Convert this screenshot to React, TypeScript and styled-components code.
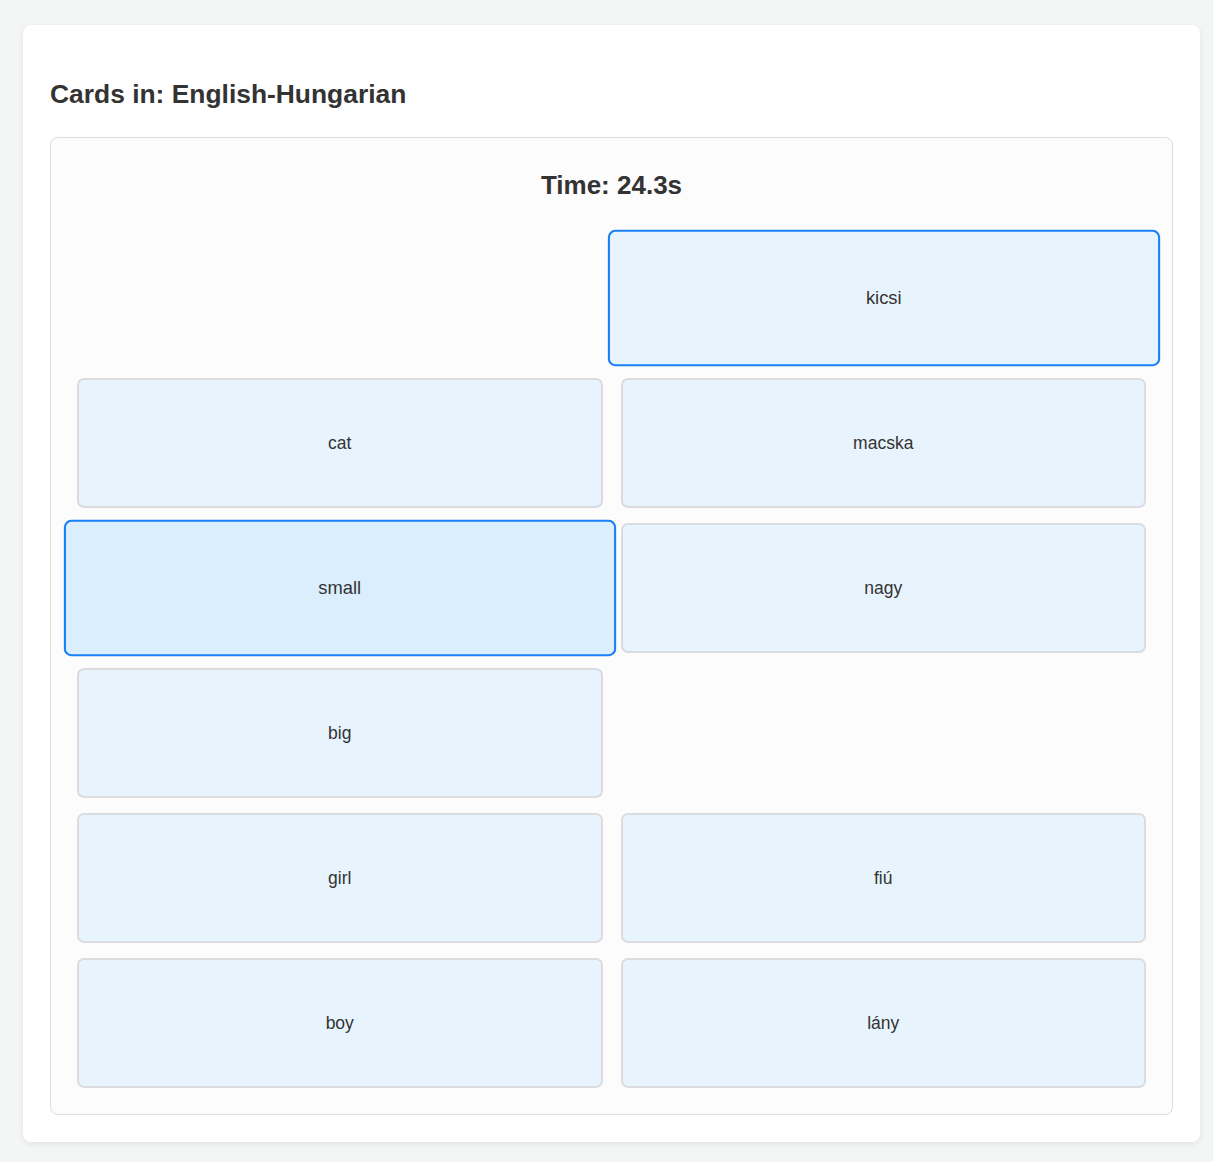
import React, {useState} from 'react';
import styled, {createGlobalStyle} from 'styled-components';

const GlobalStyle = createGlobalStyle`
  body {
    margin: 0;
    background: #f4f5f5;
    font-family: "Liberation Sans", Arial, sans-serif;
    color: #333;
  }
`;

interface Card {
  id: number;
  text: string;
  pair: number;
}

const cards: Card[] = [
  {id: 1, text: 'small', pair: 1},
  {id: 2, text: 'kicsi', pair: 1},
  {id: 3, text: 'cat', pair: 2},
  {id: 4, text: 'macska', pair: 2},
  {id: 5, text: 'small', pair: 3},
  {id: 6, text: 'nagy', pair: 4},
  {id: 7, text: 'big', pair: 4},
  {id: 8, text: 'kicsi', pair: 3},
  {id: 9, text: 'girl', pair: 5},
  {id: 10, text: 'fiú', pair: 6},
  {id: 11, text: 'boy', pair: 6},
  {id: 12, text: 'lány', pair: 5},
];

const Page = styled.div`
  padding: 25px 13px 20px 23px;
`;

const Panel = styled.div`
  background: #fff;
  border-radius: 8px;
  box-shadow: 0 2px 6px rgba(0, 0, 0, 0.08);
  padding: 27px;
`;

const Title = styled.h2`
  margin: 27px 0 27px;
  font-size: 26.4px;
  font-weight: bold;
  color: #333;
`;

const Board = styled.div`
  background: #fcfcfc;
  border: 1px solid #dddddd;
  border-radius: 8px;
  padding: 27px 26px 26px 26px;
`;

const Timer = styled.h3`
  margin: 5px 0 32px;
  text-align: center;
  font-size: 26px;
  font-weight: bold;
  color: #333;
`;

const Grid = styled.div`
  display: grid;
  grid-template-columns: 1fr 1fr;
  gap: 15px 18px;
`;

const Tile = styled.button<{$selected: boolean; $hover: boolean; $hidden: boolean}>`
  height: 130px;
  display: flex;
  align-items: center;
  justify-content: center;
  border-radius: 7px;
  border: 2px solid ${p => (p.$selected ? '#1a80f6' : '#dadcdf')};
  background: ${p => (p.$hover ? '#dbeefd' : '#e8f4fd')};
  font-family: "Liberation Sans", Arial, sans-serif;
  font-size: 17.5px;
  color: #333;
  cursor: pointer;
  visibility: ${p => (p.$hidden ? 'hidden' : 'visible')};
  transform: ${p => (p.$selected ? 'scale(1.05)' : 'none')};
  transition: transform 0.15s;
`;

export default function App() {
  const [selected, setSelected] = useState<number[]>([2, 5]);
  const matched = [1, 8];

  const toggle = (id: number) => {
    setSelected(s => (s.includes(id) ? s.filter(x => x !== id) : [...s, id]));
  };

  return (
    <Page>
      <GlobalStyle />
      <Panel>
        <Title>Cards in: English-Hungarian</Title>
        <Board>
          <Timer>Time: 24.3s</Timer>
          <Grid>
            {cards.map(card => (
              <Tile
                key={card.id}
                $selected={selected.includes(card.id)}
                $hover={card.id === 5}
                $hidden={matched.includes(card.id)}
                onClick={() => toggle(card.id)}
              >
                {card.text}
              </Tile>
            ))}
          </Grid>
        </Board>
      </Panel>
    </Page>
  );
}
